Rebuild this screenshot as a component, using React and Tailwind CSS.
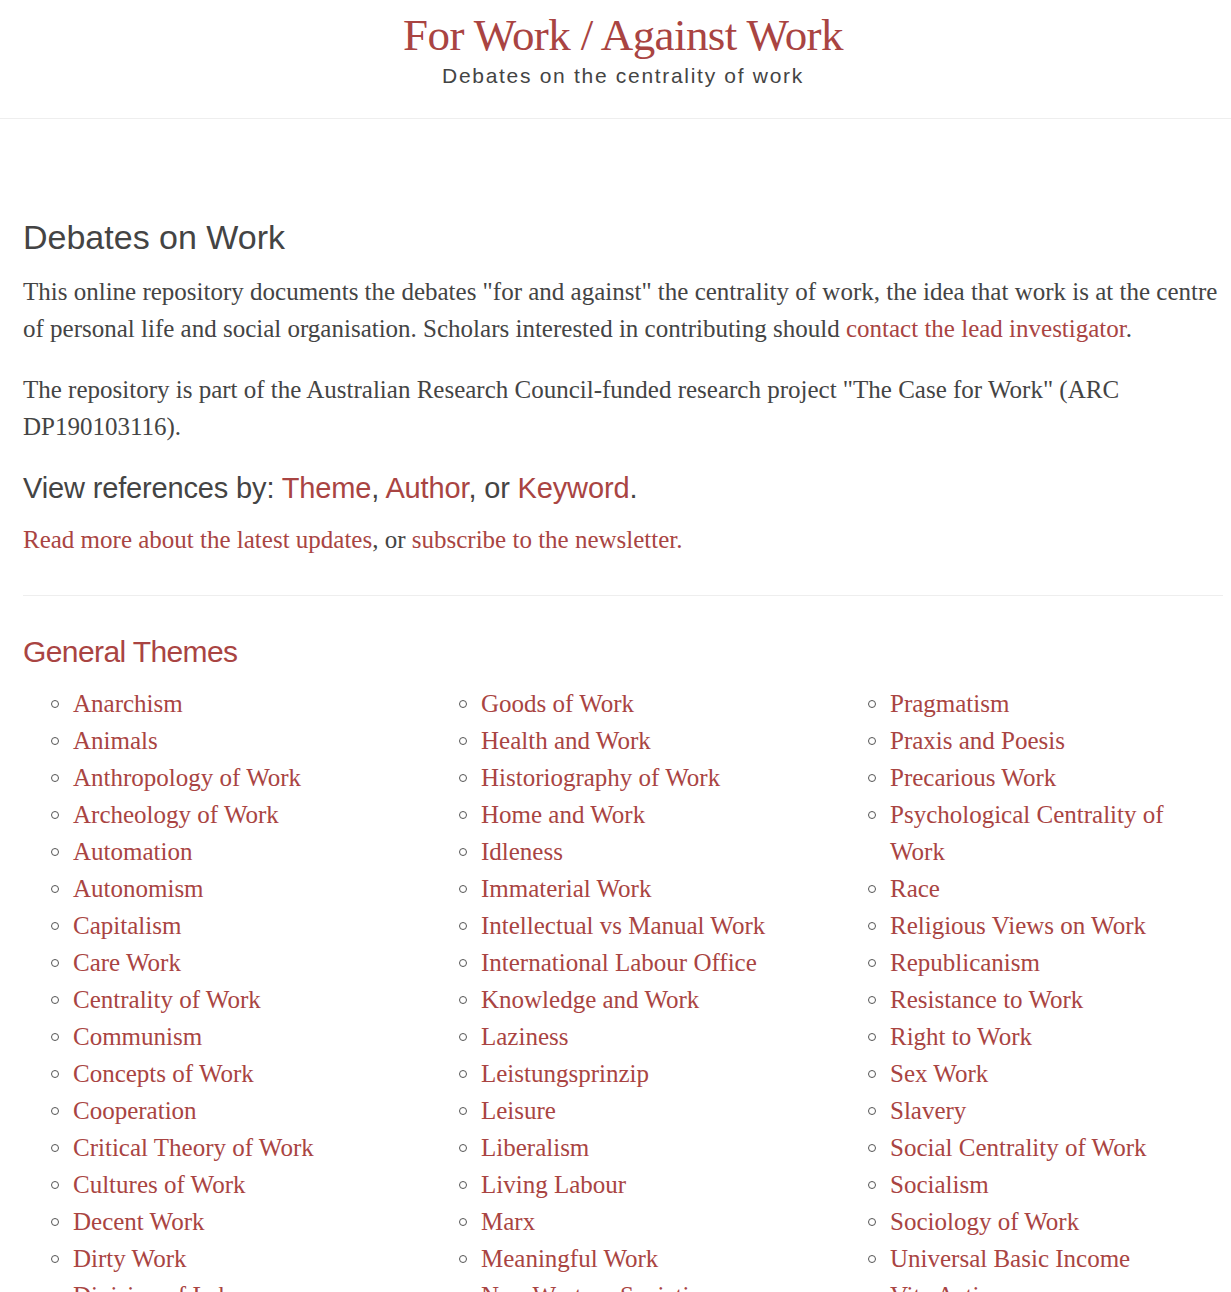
import React from "react";

const col1 = ["Anarchism","Animals","Anthropology of Work","Archeology of Work","Automation","Autonomism","Capitalism","Care Work","Centrality of Work","Communism","Concepts of Work","Cooperation","Critical Theory of Work","Cultures of Work","Decent Work","Dirty Work","Division of Labour","Economics of Work"];
const col2 = ["Goods of Work","Health and Work","Historiography of Work","Home and Work","Idleness","Immaterial Work","Intellectual vs Manual Work","International Labour Office","Knowledge and Work","Laziness","Leistungsprinzip","Leisure","Liberalism","Living Labour","Marx","Meaningful Work","Non-Western Societies","Post-Work"];
const col3 = ["Pragmatism","Praxis and Poesis","Precarious Work","Psychological Centrality of Work","Race","Religious Views on Work","Republicanism","Resistance to Work","Right to Work","Sex Work","Slavery","Social Centrality of Work","Socialism","Sociology of Work","Universal Basic Income","Vita Activa","Work Ethic"];

const serif = "font-['Liberation_Serif',serif]";
const sans = "font-['Liberation_Sans',Arial,sans-serif]";

function Col({ items }) {
  return (
    <ul className="list-none pl-[28px] text-[#444]">
      {items.map((t) => (
        <li key={t} className="flex leading-[37px]">
          <span className="w-[22px] h-[37px] shrink-0 flex items-center pt-[1px]">
            <span className="block w-[8px] h-[8px] rounded-full border border-[#555]"></span>
          </span>
          <a className="text-[#a94442]" href="#">{t}</a>
        </li>
      ))}
    </ul>
  );
}

export default function App() {
  return (
    <div className={`bg-white min-h-screen text-[#444] ${serif}`}>
      <header className="border-b border-[#eee] h-[119px] flex flex-col items-center pt-[8px] pl-[15px]">
        <h1 className={`${serif} text-[45px] leading-[54px] tracking-[-0.6px] text-[#a94442]`}>For Work / Against Work</h1>
        <p className={`${sans} text-[21px] leading-[26px] tracking-[1.7px] text-[#444] mt-[1px]`}>Debates on the centrality of work</p>
      </header>
      <main className="ml-[23px] w-[1200px] pt-[96px]">
        <h2 className={`${sans} text-[34px] leading-[44px] text-[#444]`}>Debates on Work</h2>
        <p className="text-[25px] leading-[37px] mt-[14px]">
          This online repository documents the debates "for and against" the centrality of work, the idea that work is at the centre of personal life and social organisation. Scholars interested in contributing should <a href="#" className="text-[#a94442]">contact the lead investigator</a>.
        </p>
        <p className="text-[25px] leading-[37px] mt-[24px]">
          The repository is part of the Australian Research Council-funded research project "The Case for Work" (ARC DP190103116).
        </p>
        <h3 className={`${sans} text-[29px] leading-[40px] text-[#444] mt-[23px] tracking-[-0.15px]`}>
          View references by: <a href="#" className="text-[#a94442]">Theme</a>, <a href="#" className="text-[#a94442]">Author</a>, or <a href="#" className="text-[#a94442]">Keyword</a>.
        </h3>
        <p className="text-[25px] leading-[37px] mt-[13px]">
          <a href="#" className="text-[#a94442]">Read more about the latest updates</a>, or <a href="#" className="text-[#a94442]">subscribe to the newsletter.</a>
        </p>
        <hr className="border-0 border-t border-[#eee] mt-[37px]" />
        <h3 className={`${sans} text-[30px] leading-[40px] text-[#a94442] mt-[36px] tracking-[-0.6px]`}>General Themes</h3>
        <div className="grid grid-cols-[408px_409px_360px] text-[25px] mt-[13px]">
          <Col items={col1} />
          <Col items={col2} />
          <Col items={col3} />
        </div>
      </main>
    </div>
  );
}
